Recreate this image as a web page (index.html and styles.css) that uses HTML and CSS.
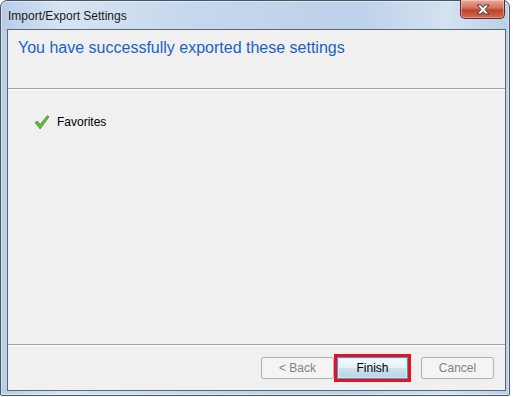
FILE: index.html
```html
<!doctype html>
<html lang="en">
<head>
  <title>Import/Export Settings</title>
  <meta charset="UTF-8">
  <link rel="stylesheet" href="styles.css">
</head>
<body>
  <div class="window">
    <div class="titlebar">
      <span class="title">Import/Export Settings</span>
      <div class="close-btn">
        <svg width="16" height="11" viewBox="0 0 16 11">
          <path d="M2 1 L6 1 L8 3.5 L10 1 L14 1 L10 5.5 L14 10 L10 10 L8 7.5 L6 10 L2 10 L6 5.5 Z" fill="#fff" stroke="#3b3b3b" stroke-width="1" stroke-linejoin="round"/>
        </svg>
      </div>
    </div>
    <div class="client">
      <div class="header">
        <h1>You have successfully exported these settings</h1>
      </div>
      <div class="content">
        <div class="item">
          <svg class="check" width="16" height="16" viewBox="0 0 16 16">
            <path d="M1 8.5 L3.5 7 L6 10.5 L13.5 1.5 L15 2.8 L6.2 15 Z" fill="#5cbd3c" stroke="#3f9a27" stroke-width="0.8" stroke-linejoin="round"/>
          </svg>
          <span>Favorites</span>
        </div>
      </div>
      <div class="footer">
        <button class="btn" disabled>&lt; Back</button>
        <div class="highlight">
          <button class="btn default">Finish</button>
        </div>
        <button class="btn cancel" disabled>Cancel</button>
      </div>
    </div>
  </div>
</body>
</html>
```

FILE: styles.css
```css
body {
  margin: 0;
  background: #fff;
  font-family: 'Liberation Sans', Arial, sans-serif;
}
.window {
  width: 508px;
  height: 394px;
  border: 1px solid #4a5462;
  border-radius: 7px 7px 2px 2px;
  background: linear-gradient(90deg, #b7cde6 0%, #d6e4f3 12%, #c4d7ec 40%, #bcd1ea 70%, #d4e2f1 88%, #b9cfe8 100%);
  display: flex;
  flex-direction: column;
  box-shadow: inset 0 0 0 1px rgba(255,255,255,0.45);
}
.titlebar {
  height: 28px;
  display: flex;
  justify-content: space-between;
  align-items: flex-start;
  padding: 0 4px 0 7px;
}
.title {
  font-size: 12px;
  color: #1a1a1a;
  margin-top: 8px;
}
.close-btn {
  width: 43px;
  height: 18px;
  margin-top: -1px;
  border: 1px solid #5e2a22;
  border-top: none;
  border-radius: 0 0 5px 5px;
  background: linear-gradient(180deg, #e8a99b 0%, #d4705c 45%, #c2432b 55%, #d2674c 100%);
  display: flex;
  align-items: center;
  justify-content: center;
  box-shadow: inset 0 0 0 1px rgba(255,255,255,0.35);
}
.client {
  margin: 0 3px 4px 6px;
  flex: 1;
  border: 1px solid #5b6877;
  background: #f0f0f0;
  display: flex;
  flex-direction: column;
}
.header {
  height: 58px;
  border-bottom: 1px solid #a0a0a0;
  box-shadow: 0 1px 0 #fff;
  padding: 0 10px;
}
h1 {
  margin: 9px 0 0 0;
  font-size: 16px;
  font-weight: normal;
  color: #1b62c5;
}
.content {
  flex: 1;
  padding: 24px 26px;
  border-bottom: 1px solid #a0a0a0;
  box-shadow: 0 1px 0 #fff;
}
.item {
  display: flex;
  align-items: center;
  gap: 7px;
  font-size: 12px;
  color: #000;
  margin-top: 1px;
}
.footer {
  height: 45px;
  display: flex;
  align-items: center;
  justify-content: flex-end;
  padding: 0 11px 0 0;
}
.btn {
  width: 73px;
  height: 22px;
  font-family: 'Liberation Sans', Arial, sans-serif;
  font-size: 12px;
  color: #000;
  border: 1px solid #707070;
  border-radius: 3px;
  background: linear-gradient(180deg, #f2f2f2 0%, #ebebeb 48%, #dddddd 52%, #cfcfcf 100%);
  padding: 0;
}
.btn:disabled {
  border-color: #adb2b5;
  background: #f4f4f4;
  color: #838383;
}
.highlight {
  border: 3px solid #e8121f;
  margin: 0 10px 0 0;
  display: flex;
}
.btn.default {
  width: 71px;
  border-color: #3c9fd4;
  border-radius: 0;
  background: linear-gradient(180deg, #f4fbfe 0%, #e4f1f8 48%, #cfe3ee 52%, #b9d3e1 100%);
  box-shadow: inset 0 0 0 1px #cdeffc;
}
```
